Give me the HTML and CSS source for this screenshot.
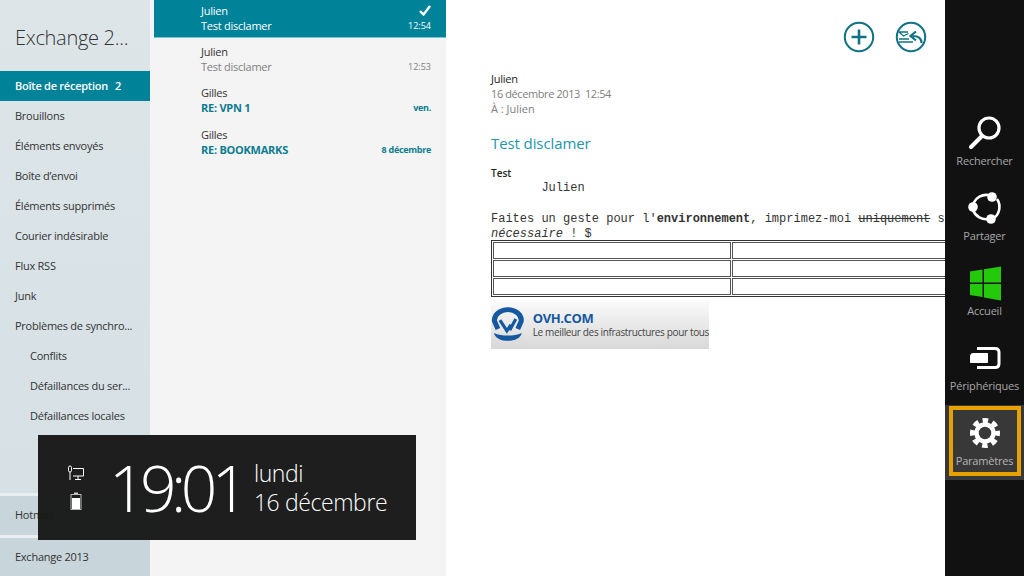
FILE: index.html
```html
<!DOCTYPE html>
<html lang="fr">
<head>
    <meta charset="UTF-8">
    <meta name="viewport" content="width=device-width, initial-scale=1.0">
    <title>Courrier</title>
    <link rel="stylesheet" href="styles.css">
</head>
<body>
    <div class="app">
        <nav class="sidebar">
            <h1 class="account-title">Exchange 2...</h1>
            <ul class="folders">
                <li class="folder active">Boîte de réception<span class="count">2</span></li>
                <li class="folder">Brouillons</li>
                <li class="folder">Éléments envoyés</li>
                <li class="folder">Boîte d’envoi</li>
                <li class="folder">Éléments supprimés</li>
                <li class="folder">Courier indésirable</li>
                <li class="folder">Flux RSS</li>
                <li class="folder">Junk</li>
                <li class="folder">Problèmes de synchro...</li>
                <li class="folder sub">Conflits</li>
                <li class="folder sub">Défaillances du ser...</li>
                <li class="folder sub">Défaillances locales</li>
            </ul>
            <div class="accounts">
                <div class="account">Hotmail</div>
                <div class="account">Exchange 2013</div>
            </div>
        </nav>

        <section class="messages">
            <div class="message selected">
                <div class="msg-top">
                    <span>Julien</span>
                    <svg class="check" width="12" height="11" viewBox="0 0 12 11"><path d="M1 6l3.500 3.500L11 1" fill="none" stroke="#fff" stroke-width="2.400"/></svg>
                </div>
                <div class="msg-bottom"><span>Test disclamer</span><span class="msg-date">12:54</span></div>
            </div>
            <div class="message read">
                <div class="msg-top"><span>Julien</span></div>
                <div class="msg-bottom"><span>Test disclamer</span><span class="msg-date">12:53</span></div>
            </div>
            <div class="message unread">
                <div class="msg-top"><span>Gilles</span></div>
                <div class="msg-bottom"><span>RE: VPN 1</span><span class="msg-date">ven.</span></div>
            </div>
            <div class="message unread">
                <div class="msg-top"><span>Gilles</span></div>
                <div class="msg-bottom"><span>RE: BOOKMARKS</span><span class="msg-date">8 décembre</span></div>
            </div>
        </section>

        <main class="reading">
            <div class="actions">
                <svg width="32" height="32" viewBox="0 0 32 32">
                    <circle cx="16" cy="16" r="14.200" fill="none" stroke="#0f7285" stroke-width="2"/>
                    <path d="M16 8.500v15M8.500 16h15" fill="none" stroke="#0f7285" stroke-width="2.600"/>
                </svg>
                <svg width="32" height="32" viewBox="0 0 32 32">
                    <circle cx="16" cy="16" r="14.200" fill="none" stroke="#0f7285" stroke-width="2"/>
                    <path d="M4 11h9M4 11l4.500 4 5-2.500M4 18h10M4 21h14" fill="none" stroke="#0f7285" stroke-width="1.300"/>
                    <path d="M26.500 22c0-4.500-3-7-9-7M21 10.500L15.500 15l5.500 4.500" fill="none" stroke="#0f7285" stroke-width="2.200"/>
                </svg>
            </div>
            <div class="sender">Julien</div>
            <div class="meta date-line">16 décembre 2013 &nbsp;12:54</div>
            <div class="meta to-line">À : Julien</div>
            <h2 class="subject">Test disclamer</h2>
            <div class="body-text">Test</div>
            <pre class="mono">       Julien

Faites un geste pour l'<b>environnement</b>, imprimez-moi <s>uniquement</s> si
<i>nécessaire</i> ! $</pre>
            <table class="signature-table">
                <tr><td></td><td></td></tr>
                <tr><td></td><td></td></tr>
                <tr><td></td><td></td></tr>
            </table>
            <div class="banner">
                <svg width="34" height="36" viewBox="0 0 34 36">
                    <path d="M7 23L3.500 15C3 8 10 3.500 17 3.500S31 8 30.500 15L27 23" fill="none" stroke="#14589f" stroke-width="5"/>
                    <path d="M9 14l7 11 4-6-1 5 6-11" fill="none" stroke="#14589f" stroke-width="3.200"/>
                    <path d="M3 27c8 3.500 20 3.500 28 0-1 5-7 8-14 8S4 32 3 27z" fill="#14589f"/>
                </svg>
                <div class="banner-text">
                    <div class="banner-name">OVH.COM</div>
                    <div class="banner-tag">Le meilleur des infrastructures pour tous</div>
                </div>
            </div>
        </main>

        <aside class="charms">
            <div class="charm">
                <svg width="36" height="36" viewBox="0 0 36 36">
                    <circle cx="22" cy="13" r="10" fill="none" stroke="#fff" stroke-width="3.200"/>
                    <path d="M15 21L4 32" stroke="#fff" stroke-width="4" stroke-linecap="round"/>
                </svg>
                <span>Rechercher</span>
            </div>
            <div class="charm">
                <svg width="36" height="36" viewBox="0 0 36 36">
                    <path d="M6.500 13A14 14 0 0 1 21 5M30 9A14 14 0 0 1 27 28M22 29A14 14 0 0 1 6 20" fill="none" stroke="#fff" stroke-width="2.600"/>
                    <circle cx="25" cy="7" r="4.800" fill="#fff"/>
                    <circle cx="6" cy="17" r="4.800" fill="#fff"/>
                    <circle cx="24" cy="29" r="4.800" fill="#fff"/>
                </svg>
                <span>Partager</span>
            </div>
            <div class="charm">
                <svg width="36" height="36" viewBox="0 0 36 36">
                    <path d="M3 6.500l12.500-2v13H3zM17 4.200L34 1.500v16H17zM3 19h12.500v13L3 30zM17 19h17v16.500l-17-3z" fill="#24c90c"/>
                </svg>
                <span>Accueil</span>
            </div>
            <div class="charm">
                <svg width="36" height="36" viewBox="0 0 36 36">
                    <path d="M10 8.500h18c2.500 0 4 1.500 4 4v11c0 2.500-1.500 4-4 4H10" fill="none" stroke="#fff" stroke-width="3"/>
                    <path d="M6 13h14c.6 0 1 .4 1 1v8c0 .6-.4 1-1 1H4c-.6 0-1-.4-1-1v-6c0-1.500 1.500-3 3-3z" fill="#fff"/>
                </svg>
                <span>Périphériques</span>
            </div>
            <div class="charm current">
                <svg width="36" height="36" viewBox="0 0 36 36">
                    <circle cx="18" cy="18" r="8.500" fill="none" stroke="#fff" stroke-width="4.500"/>
                    <circle cx="18" cy="18" r="12.500" fill="none" stroke="#fff" stroke-width="5" stroke-dasharray="5.500 4.320" stroke-dashoffset="2.750"/>
                </svg>
                <span>Paramètres</span>
            </div>
        </aside>

        <div class="clock">
            <div class="clock-icons">
                <svg width="18" height="16" viewBox="0 0 18 16">
                    <path d="M6 3.500h10.500v7.500H6M11 11v3M8 14.500h6M3 7v8" fill="none" stroke="#fff" stroke-width="1"/>
                    <rect x="1.500" y="1" width="3" height="6" rx="1.500" fill="none" stroke="#fff" stroke-width="1"/>
                </svg>
                <svg width="12" height="18" viewBox="0 0 12 18">
                    <path d="M4 .5h4v2H4z" fill="#ccc"/>
                    <rect x="1" y="2.500" width="10" height="15" fill="none" stroke="#bbb" stroke-width="1"/>
                    <rect x="2" y="6" width="8" height="11" fill="#fff"/>
                </svg>
            </div>
            <div class="clock-time">19:01</div>
            <div class="clock-date">
                <div>lundi</div>
                <div>16 décembre</div>
            </div>
        </div>
    </div>
</body>
</html>
```

FILE: styles.css
```css
* {
    box-sizing: border-box;
}
body {
    margin: 0;
    font-family: "Open Sans", "Noto Sans", sans-serif;
    font-size: 11px;
    letter-spacing: -0.25px;
    color: #333;
}
.app {
    position: relative;
    display: flex;
    width: 1024px;
    height: 576px;
    overflow: hidden;
    background: #fff;
}

/* folders */
.sidebar {
    display: flex;
    flex-direction: column;
    width: 150px;
    flex-shrink: 0;
    background: linear-gradient(#dde5e8, #d5e0e4);
}
.account-title {
    margin: 0;
    height: 71px;
    padding: 24px 0 0 15px;
    font-size: 20px;
    line-height: 28px;
    font-weight: 300;
    letter-spacing: -0.3px;
    color: #333;
}
.folders {
    list-style: none;
    margin: 0;
    padding: 0;
}
.folder {
    height: 30px;
    line-height: 30px;
    padding-left: 15px;
    white-space: nowrap;
}
.folder.sub {
    padding-left: 30px;
}
.folder.active {
    background: #008299;
    color: #fff;
    font-weight: 600;
}
.count {
    margin-left: 7px;
}
.accounts {
    margin-top: auto;
}
.account {
    height: 42px;
    line-height: 38px;
    padding-left: 15px;
    background: #c8d6dc;
    border-top: 3px solid #e9eff1;
}
.account + .account {
    height: 41px;
}

/* message list */
.messages {
    width: 296px;
    flex-shrink: 0;
    background: #f4f4f4;
    padding-left: 4px;
}
.message {
    height: 41.330px;
    padding: 6px 15px 0 47px;
    line-height: 15px;
}
.message.selected {
    height: 41px;
    margin-top: -3px;
    background: #008299;
    color: #fff;
    border-bottom: 1px solid #7cc0cc;
}
.msg-top,
.msg-bottom {
    display: flex;
    justify-content: space-between;
    align-items: center;
    height: 15px;
}
.msg-date {
    font-size: 9px;
    letter-spacing: 0;
}
.read .msg-bottom {
    color: #808080;
}
.unread .msg-bottom {
    color: #0d7c90;
    font-weight: 700;
}
.unread .msg-date {
    letter-spacing: -0.3px;
}

/* reading pane */
.reading {
    width: 499px;
    flex-shrink: 0;
    padding-left: 45px;
    overflow: hidden;
}
.actions {
    display: flex;
    justify-content: flex-end;
    gap: 20px;
    height: 71px;
    padding: 21px 18px 0 0;
}
.sender,
.meta {
    line-height: 15px;
}
.sender {
    color: #222;
}
.meta {
    color: #808080;
}
.date-line {
    letter-spacing: -0.4px;
}
.to-line {
    letter-spacing: 0;
}
.subject {
    margin: 17px 0 0;
    font-size: 15px;
    line-height: 20px;
    font-weight: 400;
    letter-spacing: -0.1px;
    color: #2396ad;
}
.body-text {
    margin-top: 13px;
    font-size: 10px;
    line-height: 15px;
    letter-spacing: 0;
    font-weight: 600;
    color: #222;
}
.mono {
    margin: 0;
    font-family: "Liberation Mono", monospace;
    font-size: 12px;
    line-height: 15.300px;
    letter-spacing: 0;
    color: #333;
    white-space: pre;
}
.signature-table {
    width: 480px;
    margin-top: -2px;
    border: 1px solid #333;
    border-spacing: 1px;
}
.signature-table td {
    height: 17px;
    width: 50%;
    padding: 0;
    border: 1px solid #555;
}
.banner {
    display: flex;
    align-items: center;
    gap: 8px;
    width: 218px;
    height: 50px;
    margin-top: 2px;
    background: linear-gradient(#fdfdfd, #f0f0f0 30%, #d8d8d8);
    overflow: hidden;
}
.banner-name {
    font-size: 13px;
    line-height: 15px;
    font-weight: 700;
    letter-spacing: -0.4px;
    color: #14589f;
}
.banner-tag {
    font-size: 10px;
    line-height: 12px;
    letter-spacing: -0.35px;
    color: #444;
    white-space: nowrap;
}

/* charms bar */
.charms {
    width: 79px;
    flex-shrink: 0;
    padding-top: 105px;
    background: #111;
}
.charm {
    position: relative;
    display: flex;
    flex-direction: column;
    align-items: center;
    height: 75px;
    padding-top: 10px;
    color: #a6a6a6;
    letter-spacing: -0.2px;
}
.charm span {
    margin-top: 2px;
    line-height: 15px;
}
.charm.current {
    background: #383838;
    color: #b4b4b4;
}
.charm.current::after {
    content: "";
    position: absolute;
    left: 4px;
    right: 3px;
    top: 1px;
    bottom: 4px;
    border: 4px solid #e8a200;
}

/* clock overlay */
.clock {
    position: absolute;
    left: 38px;
    top: 435px;
    display: flex;
    align-items: center;
    width: 378px;
    height: 105px;
    padding-left: 29px;
    background: rgba(26, 26, 26, 0.98);
    color: #fff;
}
.clock-icons {
    display: flex;
    flex-direction: column;
    align-items: center;
    gap: 11px;
    width: 18px;
}
.clock-time {
    margin-left: 24px;
    font-size: 64px;
    line-height: 80px;
    font-weight: 300;
    letter-spacing: -5.500px;
}
.clock-date {
    margin-left: 11px;
    font-size: 23px;
    line-height: 29px;
    font-weight: 300;
    letter-spacing: -0.4px;
}
```
